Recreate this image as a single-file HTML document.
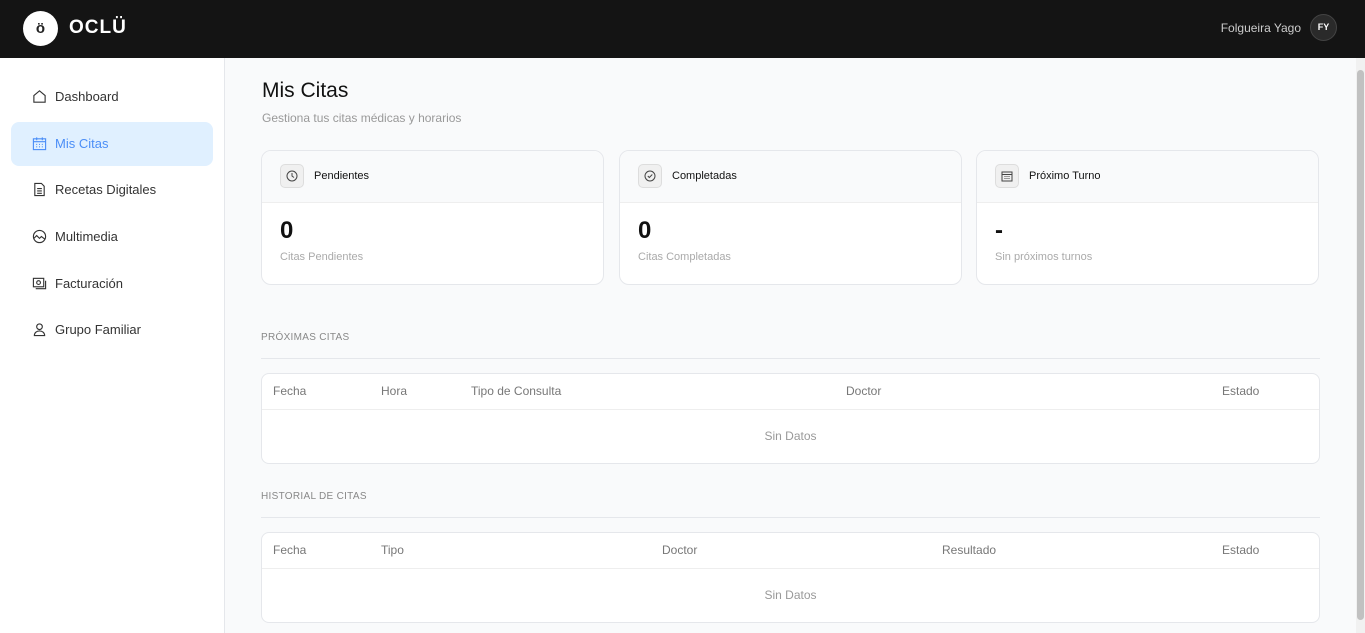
<!DOCTYPE html><html><head><meta charset="utf-8"><style>
*{box-sizing:border-box;margin:0;padding:0}
body{width:1365px;height:633px;overflow:hidden;font-family:"Liberation Sans",sans-serif;background:#f9fafb;position:relative;color:#111}
.top{position:absolute;left:0;top:0;width:1365px;height:58px;background:#141414}
.logo{position:absolute;left:23px;top:11px;width:35px;height:35px;border-radius:50%;background:#fff;text-align:center;line-height:35px;font-size:15px;font-weight:bold;color:#222}
.brand{position:absolute;left:69px;top:17px;color:#fff;font-weight:bold;font-size:19px;letter-spacing:1px}
.user{position:absolute;right:64px;top:21px;color:#ccc;font-size:12px}
.av{position:absolute;left:1310px;top:14px;width:27px;height:27px;border-radius:50%;background:#2a2a2a;border:1px solid #444;color:#fff;font-size:9px;font-weight:bold;text-align:center;line-height:25px}
.side{position:absolute;left:0;top:58px;width:225px;height:575px;background:#fff;border-right:1px solid #e5e7eb}
.nav{position:absolute;left:11px;width:202px;height:44px;border-radius:8px;font-size:13px;color:#333;padding-left:44px;line-height:44px}
.nav svg{position:absolute;left:21px;top:14px}
.nav.act{background:#e0f0ff;color:#4b8ef7}
.main{position:absolute;left:226px;top:58px;width:1130px;height:575px}
h1{position:absolute;left:36px;top:21px;font-size:21px;font-weight:normal;color:#111}
.sub{position:absolute;left:36px;top:53px;font-size:12px;color:#999}
.card{position:absolute;top:92px;width:343px;height:135px;background:#fff;border:1px solid #e5e7eb;border-radius:10px;overflow:hidden}
.ch{height:52px;background:#f9fafb;border-bottom:1px solid #eee;position:relative}
.ic{position:absolute;left:18px;top:13px;width:24px;height:24px;border:1px solid #ddd;border-radius:5px;background:#f0f0f0}
.ic svg{position:absolute;left:5px;top:5px}
.ct{position:absolute;left:52px;top:19px;font-size:11px;color:#111}
.num{position:absolute;left:18px;top:66px;font-size:24px;font-weight:bold}
.cs{position:absolute;left:18px;top:100px;font-size:11px;color:#aaa}
.sec{position:absolute;left:35px;font-size:10px;color:#888;letter-spacing:.3px;width:1059px;border-bottom:1px solid #e5e7eb;padding-bottom:15px}
.tbl{position:absolute;left:35px;width:1059px;height:91px;background:#fff;border:1px solid #e5e7eb;border-radius:8px}
.th{height:36px;border-bottom:1px solid #eee;position:relative;font-size:12px;color:#777}
.th span{position:absolute;top:10px}
.nd{text-align:center;font-size:12px;color:#999;line-height:53px}
.sb{position:absolute;left:1356px;top:58px;width:9px;height:575px;background:#f1f1f1}
.sb div{position:absolute;left:1px;top:12px;width:7px;height:550px;background:#c1c1c1;border-radius:4px}
</style></head><body>
<div class="top"><div class="logo">ö</div><div class="brand">OCLÜ</div><div class="user">Folgueira Yago</div><div class="av">FY</div></div>
<div class="side">
<div class="nav" style="top:17px"><svg width="15" height="15" viewBox="0 0 16 16" fill="none" stroke="#333" stroke-width="1.2"><path d="M2 7L8 2l6 5v7H2z"/></svg>Dashboard</div>
<div class="nav act" style="top:64px"><svg width="15" height="15" viewBox="0 0 16 16" fill="none" stroke="#4b8ef7" stroke-width="1.2"><rect x="1.5" y="3" width="13" height="11.5"/><path d="M1.5 6h13M5 1.5v3M11 1.5v3M4.5 9h1M7.5 9h1M10.5 9h1M4.5 11.5h1M7.5 11.5h1M10.5 11.5h1"/></svg>Mis Citas</div>
<div class="nav" style="top:110px"><svg width="15" height="15" viewBox="0 0 16 16" fill="none" stroke="#333" stroke-width="1.2"><path d="M3 1.5h7l3 3v10H3zM5.5 7h5M5.5 9.5h5M5.5 12h5"/></svg>Recetas Digitales</div>
<div class="nav" style="top:157px"><svg width="15" height="15" viewBox="0 0 16 16" fill="none" stroke="#333" stroke-width="1.2"><circle cx="8" cy="8" r="6.5"/><path d="M2 10l3-3 3 3 2-2 4 3"/></svg>Multimedia</div>
<div class="nav" style="top:204px"><svg width="15" height="15" viewBox="0 0 16 16" fill="none" stroke="#333" stroke-width="1.2"><rect x="1.5" y="2.5" width="11" height="9"/><path d="M4 13.5h10.5V5"/><circle cx="7" cy="7" r="2"/></svg>Facturación</div>
<div class="nav" style="top:250px"><svg width="15" height="15" viewBox="0 0 16 16" fill="none" stroke="#333" stroke-width="1.2"><circle cx="8" cy="5" r="3"/><path d="M2.5 14.5c0-3 2.5-5 5.5-5s5.5 2 5.5 5z"/></svg>Grupo Familiar</div>
</div>
<div class="main">
<h1>Mis Citas</h1><div class="sub">Gestiona tus citas médicas y horarios</div>
<div class="card" style="left:35px"><div class="ch"><div class="ic"><svg width="12" height="12" viewBox="0 0 12 12" fill="none" stroke="#444"><circle cx="6" cy="6" r="5"/><path d="M6 3v3l2 1.5"/></svg></div><div class="ct">Pendientes</div></div><div class="num">0</div><div class="cs">Citas Pendientes</div></div>
<div class="card" style="left:393px"><div class="ch"><div class="ic"><svg width="12" height="12" viewBox="0 0 12 12" fill="none" stroke="#444"><circle cx="6" cy="6" r="5"/><path d="M3.8 6l1.5 1.5 3-3"/></svg></div><div class="ct">Completadas</div></div><div class="num">0</div><div class="cs">Citas Completadas</div></div>
<div class="card" style="left:750px"><div class="ch"><div class="ic"><svg width="12" height="12" viewBox="0 0 12 12" fill="none" stroke="#444"><rect x="1" y="2" width="10" height="9"/><path d="M1 4.5h10M3.5 6.5h1M5.5 6.5h1M7.5 6.5h1M3.5 8.5h1M5.5 8.5h1M7.5 8.5h1"/></svg></div><div class="ct">Próximo Turno</div></div><div class="num">-</div><div class="cs">Sin próximos turnos</div></div>
<div class="sec" style="top:274px">PRÓXIMAS CITAS</div>
<div class="tbl" style="top:315px"><div class="th"><span style="left:11px">Fecha</span><span style="left:119px">Hora</span><span style="left:209px">Tipo de Consulta</span><span style="left:584px">Doctor</span><span style="left:960px">Estado</span></div><div class="nd">Sin Datos</div></div>
<div class="sec" style="top:433px">HISTORIAL DE CITAS</div>
<div class="tbl" style="top:474px"><div class="th"><span style="left:11px">Fecha</span><span style="left:119px">Tipo</span><span style="left:400px">Doctor</span><span style="left:680px">Resultado</span><span style="left:960px">Estado</span></div><div class="nd">Sin Datos</div></div>
</div>
<div class="sb"><div></div></div>
</body></html>
